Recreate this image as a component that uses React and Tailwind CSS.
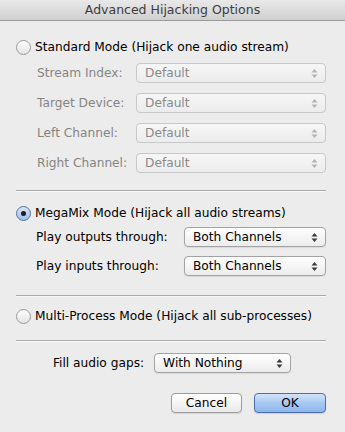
import React from "react";

function Arrows({ disabled }) {
  const c = disabled ? "#b4b4b4" : "#3a3a3a";
  return (
    <svg width="7" height="11" viewBox="0 0 7 11" className="shrink-0">
      <path d="M3.5 1 L6.5 4.5 L0.5 4.5 Z" fill={c} />
      <path d="M3.5 10 L6.5 6.5 L0.5 6.5 Z" fill={c} />
    </svg>
  );
}

function Select({ value, disabled, className = "" }) {
  return (
    <div
      className={`flex h-[20px] items-center justify-between rounded-[4px] border pl-[8px] pr-[7px] ${
        disabled
          ? "border-[#c8c8c8] bg-gradient-to-b from-[#f6f6f6] to-[#ececec] text-[#8a8a8a]"
          : "border-[#a3a3a3] bg-gradient-to-b from-white to-[#ececec] text-black shadow-[0_1px_1px_rgba(0,0,0,0.08)]"
      } ${className}`}
    >
      <span className="leading-none">{value}</span>
      <Arrows disabled={disabled} />
    </div>
  );
}

function Radio({ checked }) {
  return (
    <div
      className={`flex h-[15px] w-[15px] shrink-0 items-center justify-center rounded-full border ${
        checked
          ? "border-[#5b7094] bg-gradient-to-b from-[#d6e4f7] to-[#9fc0ec]"
          : "border-[#9a9a9a] bg-gradient-to-b from-white to-[#e3e3e3]"
      }`}
    >
      {checked && <div className="h-[5px] w-[5px] rounded-full bg-[#1d1d1d]" />}
    </div>
  );
}

function Separator() {
  return <div className="h-px w-full bg-[#a9a9a9] shadow-[0_1px_0_#f8f8f8]" />;
}

const standardRows = ["Stream Index:", "Target Device:", "Left Channel:", "Right Channel:"];

export default function App() {
  return (
    <div
      className="flex h-[432px] w-[345px] flex-col bg-[#ececec] text-[12.2px] text-black"
      style={{ fontFamily: '"DejaVu Sans", sans-serif' }}
    >
      {/* title bar */}
      <div className="flex h-[21px] shrink-0 items-center justify-center border-b border-[#9b9b9b] bg-gradient-to-b from-[#e9e9e9] to-[#d0d0d0] text-[12.5px] text-[#3c3c3c]">
        Advanced Hijacking Options
      </div>

      <div className="flex flex-col pl-[16px] pr-[19px]">
        {/* standard mode */}
        <div className="mt-[18px] flex h-[16px] items-center gap-[4px]">
          <Radio />
          <span>Standard Mode (Hijack one audio stream)</span>
        </div>
        <div className="mt-[8px] flex flex-col gap-[10px] pl-[21px]">
          {standardRows.map((label) => (
            <div key={label} className="flex items-center">
              <span className="w-[99px] shrink-0 text-[#858585]">{label}</span>
              <Select value="Default" disabled className="flex-1" />
            </div>
          ))}
        </div>

        <div className="mt-[17px]">
          <Separator />
        </div>

        {/* megamix */}
        <div className="mt-[14px] flex h-[16px] items-center gap-[4px]">
          <Radio checked />
          <span>MegaMix Mode (Hijack all audio streams)</span>
        </div>
        <div className="mt-[6px] flex flex-col gap-[9px] pl-[20px]">
          <div className="flex items-center">
            <span className="w-[148px] shrink-0">Play outputs through:</span>
            <Select value="Both Channels" className="flex-1" />
          </div>
          <div className="flex items-center">
            <span className="w-[148px] shrink-0">Play inputs through:</span>
            <Select value="Both Channels" className="flex-1" />
          </div>
        </div>

        <div className="mt-[19px]">
          <Separator />
        </div>

        {/* multi-process */}
        <div className="mt-[12px] flex h-[16px] items-center gap-[4px]">
          <Radio />
          <span>Multi-Process Mode (Hijack all sub-processes)</span>
        </div>

        <div className="mt-[16px]">
          <Separator />
        </div>

        {/* fill gaps */}
        <div className="mt-[12px] flex items-center justify-center gap-[10px] pl-[2px]">
          <span>Fill audio gaps:</span>
          <Select value="With Nothing" className="w-[137px]" />
        </div>

        {/* buttons */}
        <div className="mt-[20px] flex justify-end gap-[12px]">
          <button className="h-[20px] w-[71px] rounded-[4px] border border-[#9c9c9c] bg-gradient-to-b from-white to-[#e9e9e9] leading-none text-black shadow-[0_1px_1px_rgba(0,0,0,0.1)]">
            Cancel
          </button>
          <button className="h-[20px] w-[72px] rounded-[4px] border border-[#4e6fa8] bg-gradient-to-b from-[#d3e4fa] via-[#a8c8f2] to-[#8db7ee] leading-none text-black shadow-[0_1px_1px_rgba(0,0,0,0.12)]">
            OK
          </button>
        </div>
      </div>
    </div>
  );
}
